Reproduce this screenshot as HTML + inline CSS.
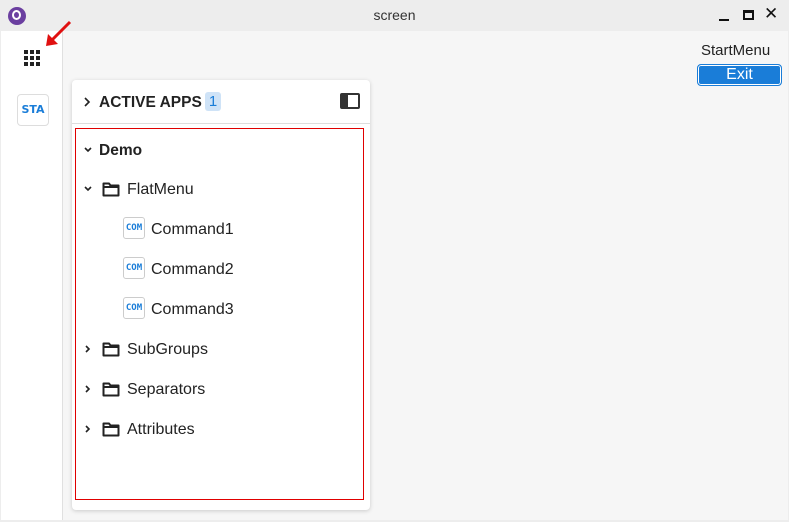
<!DOCTYPE html>
<html><head><style>
*{margin:0;padding:0;box-sizing:border-box}
body{width:789px;height:522px;background:#ededed;font-family:"Liberation Sans","DejaVu Sans",sans-serif;position:relative;overflow:hidden;color:#222}
.abs{position:absolute}
.title{left:0;top:0;width:789px;height:31px;background:#ededed;font-size:14px;text-align:center;line-height:31px;color:#333}
.side{left:1px;top:31px;width:62px;height:489px;background:#fff;border-right:1px solid #e0e0e0}
.main{left:63px;top:31px;width:725px;height:489px;background:#f6f6f6}
.panel{left:72px;top:80px;width:298px;height:430px;background:#fff;border-radius:4px;box-shadow:0 1px 4px rgba(0,0,0,.18)}
.row{position:absolute;font-size:16px;line-height:20px;white-space:nowrap}
.com{position:absolute;width:22px;height:22px;border:1px solid #ccc;border-radius:3px;color:#1a7dd8;font:bold 9px "DejaVu Sans Mono",monospace;text-align:center;line-height:20px;background:#fff}
</style></head><body>
<div class="abs title">screen</div>
<div class="abs" style="left:8px;top:7px;width:18px;height:18px;border-radius:50%;background:#6b3fa0"></div>
<div class="abs" style="left:12px;top:10px;width:9px;height:10px;border:2px solid #fff;border-radius:50%"></div>
<div class="abs" style="left:719px;top:19px;width:10px;height:2px;background:#111"></div>
<div class="abs" style="left:743px;top:10px;width:11px;height:10px;border:2px solid #111;border-top-width:3px"></div>
<div class="abs" style="left:764px;top:4px;font:bold 17px 'DejaVu Sans',sans-serif;color:#111">✕</div>
<div class="abs side"></div>
<div class="abs main"></div>
<svg class="abs" style="left:22px;top:48px" width="20" height="20"><g fill="#222">
<rect x="2" y="2" width="4" height="4"/><rect x="8" y="2" width="4" height="4"/><rect x="14" y="2" width="4" height="4"/>
<rect x="2" y="8" width="4" height="4"/><rect x="8" y="8" width="4" height="4"/><rect x="14" y="8" width="4" height="4"/>
<rect x="2" y="14" width="4" height="4"/><rect x="8" y="14" width="4" height="4"/><rect x="14" y="14" width="4" height="4"/></g></svg>
<svg class="abs" style="left:44px;top:20px" width="30" height="28"><path d="M26 2 L6 22" stroke="#e01010" stroke-width="3"/><path d="M2 26 L4 14 L14 24Z" fill="#e01010"/></svg>
<div class="abs" style="left:17px;top:94px;width:32px;height:32px;border:1px solid #ddd;border-radius:4px;background:#fff;color:#1a7dd8;font:bold 11px 'DejaVu Sans',sans-serif;text-align:center;line-height:30px">STA</div>
<div class="abs" style="left:701px;top:42px;font-size:15px;color:#222">StartMenu</div>
<div class="abs" style="left:697px;top:64px;width:85px;height:22px;background:#1a7dd8;border:1px solid #1a7dd8;box-shadow:inset 0 0 0 1px #fff;border-radius:4px;color:#fff;font-size:16px;text-align:center;line-height:20px">Exit</div>
<div class="abs panel"></div>
<svg class="abs" style="left:83px;top:96px" width="8" height="12"><path d="M2 2 L6 6 L2 10" stroke="#222" stroke-width="1.6" fill="none"/></svg>
<div class="row" style="left:99px;top:93px;font-weight:bold;font-size:15.5px;color:#222">ACTIVE APPS</div>
<div class="abs" style="left:205px;top:92px;width:16px;height:19px;background:#cfe3f7;border-radius:3px;color:#1a7dd8;font-size:15px;text-align:center;line-height:19px">1</div>
<div class="abs" style="left:340px;top:93px;width:20px;height:16px;border:2px solid #333;border-radius:2px;border-left:8px solid #333"></div>
<div class="abs" style="left:72px;top:123px;width:298px;height:1px;background:#ddd"></div>
<div class="abs" style="left:75px;top:128px;width:289px;height:372px;border:1px solid #e00000"></div>
<svg width="0" height="0" style="position:absolute"><defs>
<symbol id="dn" viewBox="0 0 10 10"><path d="M2 3 L5 6 L8 3" stroke="#222" stroke-width="1.6" fill="none"/></symbol>
<symbol id="rt" viewBox="0 0 10 10"><path d="M3 2 L6 5 L3 8" stroke="#222" stroke-width="1.6" fill="none"/></symbol>
<symbol id="fd" viewBox="0 0 18 16"><path d="M1.5 2.5 H7 L8.5 4.5 H16.5 V14.5 H1.5 Z M1.5 6 H16.5" stroke="#222" stroke-width="2" fill="none" stroke-linejoin="round"/></symbol>
</defs></svg>
<svg class="abs" style="left:83px;top:145px" width="10" height="10"><use href="#dn"/></svg>
<div class="row" style="left:99px;top:141px;font-weight:bold;font-size:15.5px">Demo</div>
<svg class="abs" style="left:83px;top:184px" width="10" height="10"><use href="#dn"/></svg>
<svg class="abs" style="left:102px;top:181px" width="18" height="16"><use href="#fd"/></svg>
<div class="row" style="left:127px;top:180px">FlatMenu</div>
<div class="com" style="left:123px;top:217px">COM</div><div class="row" style="left:151px;top:220px">Command1</div>
<div class="com" style="left:123px;top:257px">COM</div><div class="row" style="left:151px;top:260px">Command2</div>
<div class="com" style="left:123px;top:297px">COM</div><div class="row" style="left:151px;top:300px">Command3</div>
<svg class="abs" style="left:83px;top:344px" width="10" height="10"><use href="#rt"/></svg>
<svg class="abs" style="left:102px;top:341px" width="18" height="16"><use href="#fd"/></svg>
<div class="row" style="left:127px;top:340px">SubGroups</div>
<svg class="abs" style="left:83px;top:384px" width="10" height="10"><use href="#rt"/></svg>
<svg class="abs" style="left:102px;top:381px" width="18" height="16"><use href="#fd"/></svg>
<div class="row" style="left:127px;top:380px">Separators</div>
<svg class="abs" style="left:83px;top:424px" width="10" height="10"><use href="#rt"/></svg>
<svg class="abs" style="left:102px;top:421px" width="18" height="16"><use href="#fd"/></svg>
<div class="row" style="left:127px;top:420px">Attributes</div>
</body></html>
